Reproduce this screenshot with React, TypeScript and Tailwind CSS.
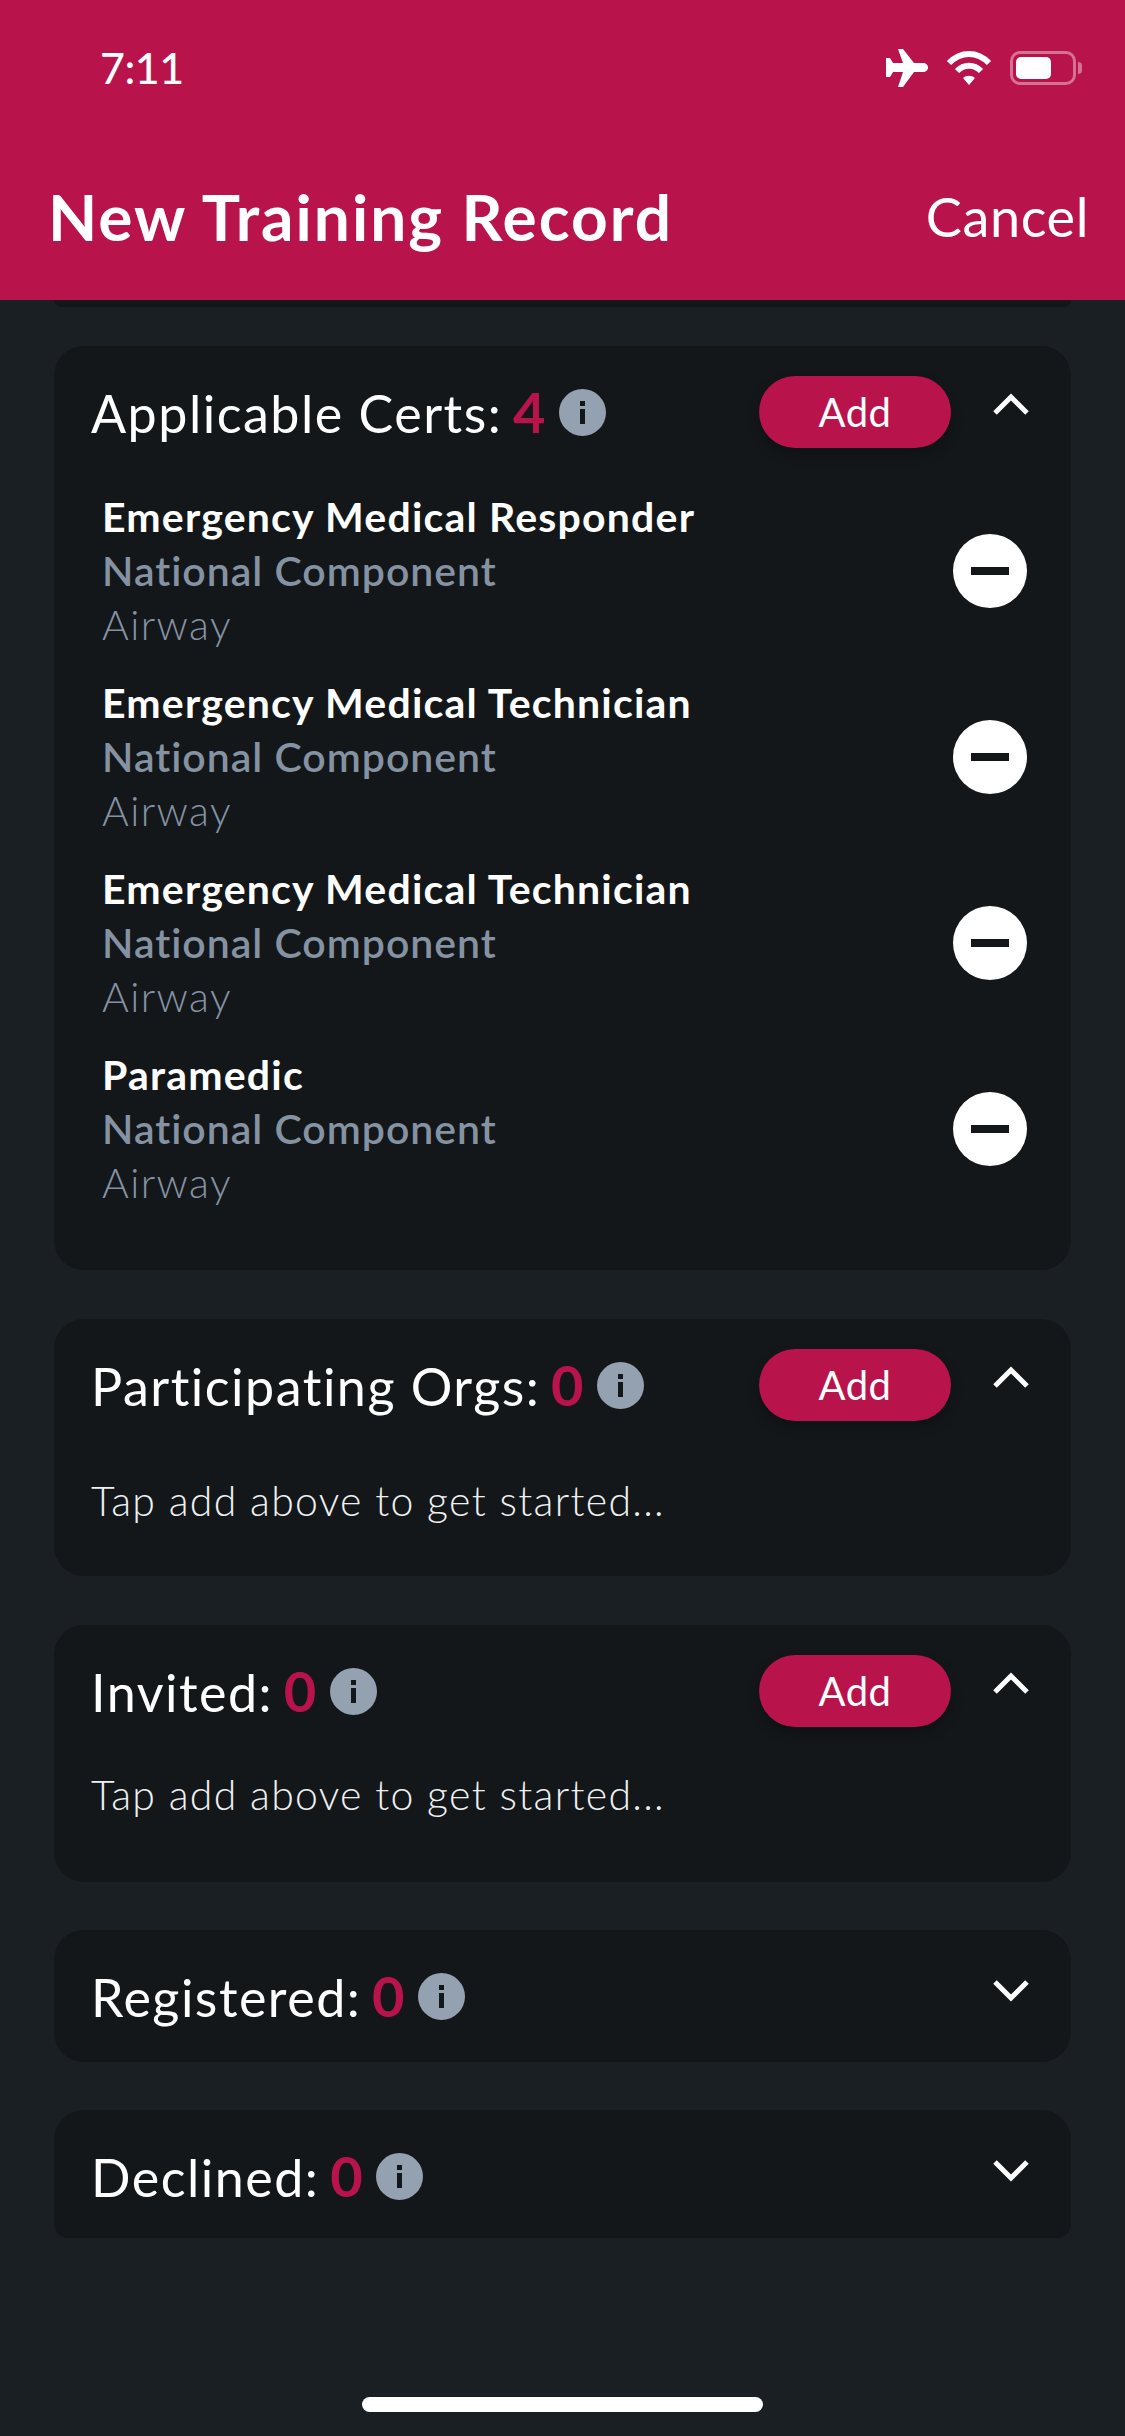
import React from 'react';

const certs = [
  'Emergency Medical Responder',
  'Emergency Medical Technician',
  'Emergency Medical Technician',
  'Paramedic',
];

function InfoDot() {
  return (
    <svg viewBox="0 0 47 47" className="w-[47px] h-[47px] shrink-0">
      <circle cx="23.5" cy="23.500" r="23.5" fill="#94a1b0" />
      <rect x="21" y="12" width="5" height="5" fill="#13171a" />
      <rect x="21" y="20" width="5" height="15" fill="#13171a" />
    </svg>
  );
}

function Chevron({ up }: { up: boolean }) {
  return (
    <svg viewBox="0 0 36 22" className="w-9 h-[22px]">
      <path
        d={up ? 'M2 20 L18 4 L34 20' : 'M2 2 L18 18 L34 2'}
        fill="none"
        stroke="#fff"
        strokeWidth="5"
      />
    </svg>
  );
}

function CardHeader({ label, count, open }: { label: string; count: number; open: boolean }) {
  return (
    <div className="flex items-start justify-between h-[72px]">
      <div className="flex items-center gap-3 h-[72px] pl-[37px]">
        <div className="text-[52px] leading-[70px] tracking-[1.5px] text-white whitespace-nowrap">
          {label}: <span className="-ml-1 text-[56px] font-bold text-[#b9134b]">{count}</span>
        </div>
        <InfoDot />
      </div>
      <div className="flex items-start">
        {open && (
          <button className="w-48 h-[72px] rounded-full bg-[#b9134b] text-white text-[40px] tracking-[0.5px] shadow-[0_6px_12px_rgba(0,0,0,0.25)]">
            Add
          </button>
        )}
        <div className={`w-[120px] flex justify-center ${open ? 'pt-[17px]' : 'pt-5'}`}>
          <Chevron up={open} />
        </div>
      </div>
    </div>
  );
}

function EmptyHint({ className }: { className: string }) {
  return <p className={`pl-[37px] text-[41px] leading-[56px] tracking-[1.3px] text-[#eef0f2] font-light ${className}`}>Tap add above to get started...</p>;
}

export default function App() {
  return (
    <div className="relative w-[1125px] h-[2436px] overflow-hidden bg-[#1a1f23] font-['Lato','Inter',sans-serif]">
      <header className="relative z-10 h-[300px] bg-[#b9134b] flex flex-col px-[50px]">
        <div className="flex items-center justify-between h-[84px] mt-[26px]">
          <span className="ml-[50px] text-[43px] font-medium text-white -tracking-[0.5px]">7:11</span>
          <div className="flex items-center gap-[18px] -mr-[7px]">
            <svg viewBox="0 0 42 38" className="w-[42px] h-[38px]" fill="#fff">
              <path d="M12 0h5l11 14h9c3 0 5 2 5 4.500s-2 4.500-5 4.500h-9L17 38h-5l5-15H7l-3 5H0V9h4l3 5h10z" />
            </svg>
            <svg viewBox="0 0 46 36" className="w-[46px] h-9" fill="none" stroke="#fff" strokeWidth="6">
              <path d="M3 13C15 1 31 1 43 13" />
              <path d="M11 21c7-7 17-7 24 0" />
              <path d="M23 35l-6-7c3.500-3 8.500-3 12 0z" fill="#fff" strokeWidth="0" />
            </svg>
            <div className="flex items-center gap-[2px]">
              <div className="w-[66px] h-[34px] rounded-[10px] border-[3px] border-white/40 p-[3px]">
                <div className="w-[35px] h-full rounded-[5px] bg-white" />
              </div>
              <div className="w-1 h-3 rounded-r bg-white/40" />
            </div>
          </div>
        </div>
        <div className="flex items-center justify-between mt-[67px]">
          <h1 className="-ml-[2px] text-[64px] leading-[80px] font-bold tracking-[2px] text-white">New Training Record</h1>
          <button className="text-[54px] leading-[80px] tracking-[0.6px] text-white -mr-[14px]">Cancel</button>
        </div>
      </header>

      <main className="px-[54px] flex flex-col">
        <div className="h-[7px] rounded-b-[24px] bg-[#13171a]" />

        <section className="mt-[39px] h-[924px] rounded-[30px] bg-[#13171a] pt-[30px]">
          <CardHeader label="Applicable Certs" count={4} open />
          <div className="flex flex-col mt-[30px]">
            {certs.map((cert, i) => (
              <div key={i} className="flex items-center justify-between h-[186px] pl-[48px] pr-[44px]">
                <div className="flex flex-col">
                  <span className="text-[41px] leading-[54px] tracking-[1.2px] font-bold text-white">{cert}</span>
                  <span className="text-[41px] leading-[54px] tracking-[1px] font-semibold text-[#8592a2]">National Component</span>
                  <span className="text-[41px] leading-[54px] tracking-[1.4px] font-light text-[#8592a2]">Airway</span>
                </div>
                <div className="w-[74px] h-[74px] rounded-full bg-white flex items-center justify-center">
                  <div className="w-[38px] h-2 bg-[#13171a]" />
                </div>
              </div>
            ))}
          </div>
        </section>

        <section className="mt-[49px] h-[257px] rounded-[30px] bg-[#13171a] pt-[30px]">
          <CardHeader label="Participating Orgs" count={0} open />
          <EmptyHint className="mt-[52px]" />
        </section>

        <section className="mt-[49px] h-[257px] rounded-[30px] bg-[#13171a] pt-[30px]">
          <CardHeader label="Invited" count={0} open />
          <EmptyHint className="mt-10" />
        </section>

        <section className="mt-[48px] h-[132px] rounded-[30px] bg-[#13171a] pt-[30px]">
          <CardHeader label="Registered" count={0} open={false} />
        </section>

        <section className="mt-[48px] h-[128px] rounded-t-[30px] rounded-b-[14px] bg-[#13171a] pt-[30px]">
          <CardHeader label="Declined" count={0} open={false} />
        </section>
      </main>

      <div className="absolute left-[362px] top-[2397px] w-[401px] h-[15px] rounded-full bg-white" />
    </div>
  );
}
